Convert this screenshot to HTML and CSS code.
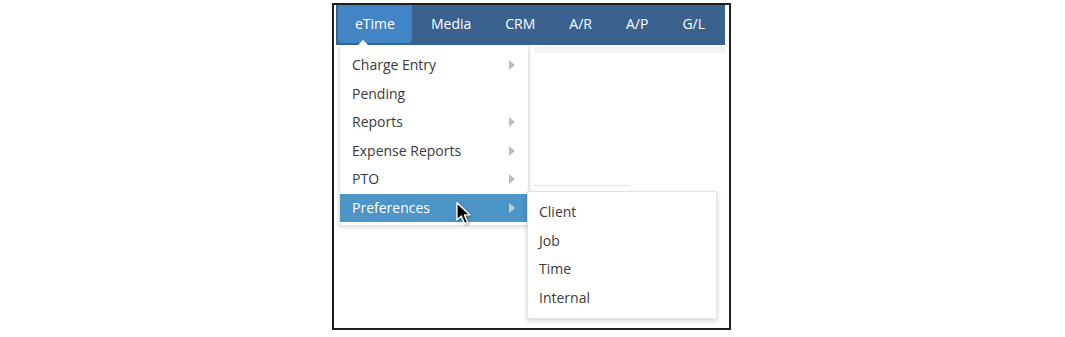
FILE: index.html
```html
<!DOCTYPE html>
<html lang="en">
<head>
  <meta charset="UTF-8">
  <title>eTime Menu</title>
  <link rel="stylesheet" href="styles.css">
</head>
<body>
  <div class="frame">
    <!-- Top navigation -->
    <div class="nav">
      <div class="nav-item active">eTime</div>
      <div class="nav-item first">Media</div>
      <div class="nav-item">CRM</div>
      <div class="nav-item">A/R</div>
      <div class="nav-item">A/P</div>
      <div class="nav-item">G/L</div>
    </div>
    <!-- Page behind the menu -->
    <div class="page">
      <div class="toolbar"></div>
      <div class="page-line"></div>
    </div>

    <!-- eTime dropdown -->
    <div class="dropdown">
      <div class="menu-item">Charge Entry <span class="caret-right"></span></div>
      <div class="menu-item">Pending</div>
      <div class="menu-item">Reports <span class="caret-right"></span></div>
      <div class="menu-item">Expense Reports <span class="caret-right"></span></div>
      <div class="menu-item">PTO <span class="caret-right"></span></div>
      <div class="menu-item selected">Preferences <span class="caret-right"></span></div>
    </div>

    <!-- Preferences submenu -->
    <div class="submenu">
      <div class="menu-item">Client</div>
      <div class="menu-item">Job</div>
      <div class="menu-item">Time</div>
      <div class="menu-item">Internal</div>
    </div>

    <!-- Mouse pointer -->
    <svg class="cursor" width="19" height="25" viewBox="0 0 17 23">
      <path d="M1.5 1.5 L1.5 17.5 L5.5 13.8 L8.6 20.8 L11.4 19.6 L8.4 12.8 L13.6 12.8 Z" fill="#000" stroke="#fff" stroke-width="1.3" stroke-linejoin="round"/>
    </svg>
  </div>
</body>
</html>
```

FILE: styles.css
```css
/* Base */
* {
  margin: 0;
  padding: 0;
  box-sizing: border-box;
}
body {
  background: #fff;
  font-family: 'Open Sans', 'Liberation Sans', sans-serif;
  font-size: 14px;
  color: #3a3a3a;
}
/* Screenshot frame */
.frame {
  position: relative;
  width: 399px;
  height: 327px;
  margin: 3px 0 0 332px;
  border: 2px solid #1e1e1e;
  background: #fff;
}
/* Navigation bar */
.nav {
  display: flex;
  height: 40px;
  margin: 0 4px 0 2px;
  padding-left: 2px;
  background: #39628f;
}
.nav-item {
  height: 38px;
  padding: 0 17px;
  line-height: 38px;
  color: #fff;
  font-size: 14px;
}
.nav-item.active {
  background: #4384c5;
  border-radius: 0 0 4px 4px;
}
.nav-item.first {
  padding-left: 19px;
}
/* Page content behind menus */
.page {
  margin: 2px 4px 0 200px;
}
.toolbar {
  height: 6px;
  background: #f4f4f4;
}
.page-line {
  width: 96px;
  height: 1px;
  margin-top: 132px;
  background: #e2e2e2;
}
/* Dropdown menus */
.dropdown {
  position: absolute;
  left: 5px;
  top: 41px;
  width: 190px;
  padding: 5px 0 3px;
  background: #fff;
  border: 1px solid #e4e4e4;
  border-top: none;
  box-shadow: 0 1px 4px rgba(0, 0, 0, 0.15);
}
.dropdown::before {
  content: "";
  position: absolute;
  left: 17px;
  top: -6px;
  border-left: 6px solid transparent;
  border-right: 6px solid transparent;
  border-bottom: 6px solid #fff;
}
.menu-item {
  position: relative;
  height: 28.5px;
  line-height: 28.5px;
  padding-left: 12px;
  white-space: nowrap;
}
.menu-item.selected {
  background: #4c95c6;
  color: #fff;
}
.caret-right {
  position: absolute;
  right: 13px;
  top: 9px;
  border-top: 5px solid transparent;
  border-bottom: 5px solid transparent;
  border-left: 6px solid #bdbdbd;
}
.selected .caret-right {
  border-left-color: #b9cfe0;
}
.submenu {
  position: absolute;
  left: 193px;
  top: 186px;
  width: 190px;
  padding: 6px 0;
  background: #fff;
  border: 1px solid #e2e2e2;
  box-shadow: 0 2px 5px rgba(0, 0, 0, 0.18);
}
.submenu .menu-item {
  padding-left: 11px;
}
/* Pointer over the Preferences row */
.cursor {
  position: absolute;
  left: 121px;
  top: 196px;
  filter: drop-shadow(1px 1px 1px rgba(0, 0, 0, 0.35));
}
```
